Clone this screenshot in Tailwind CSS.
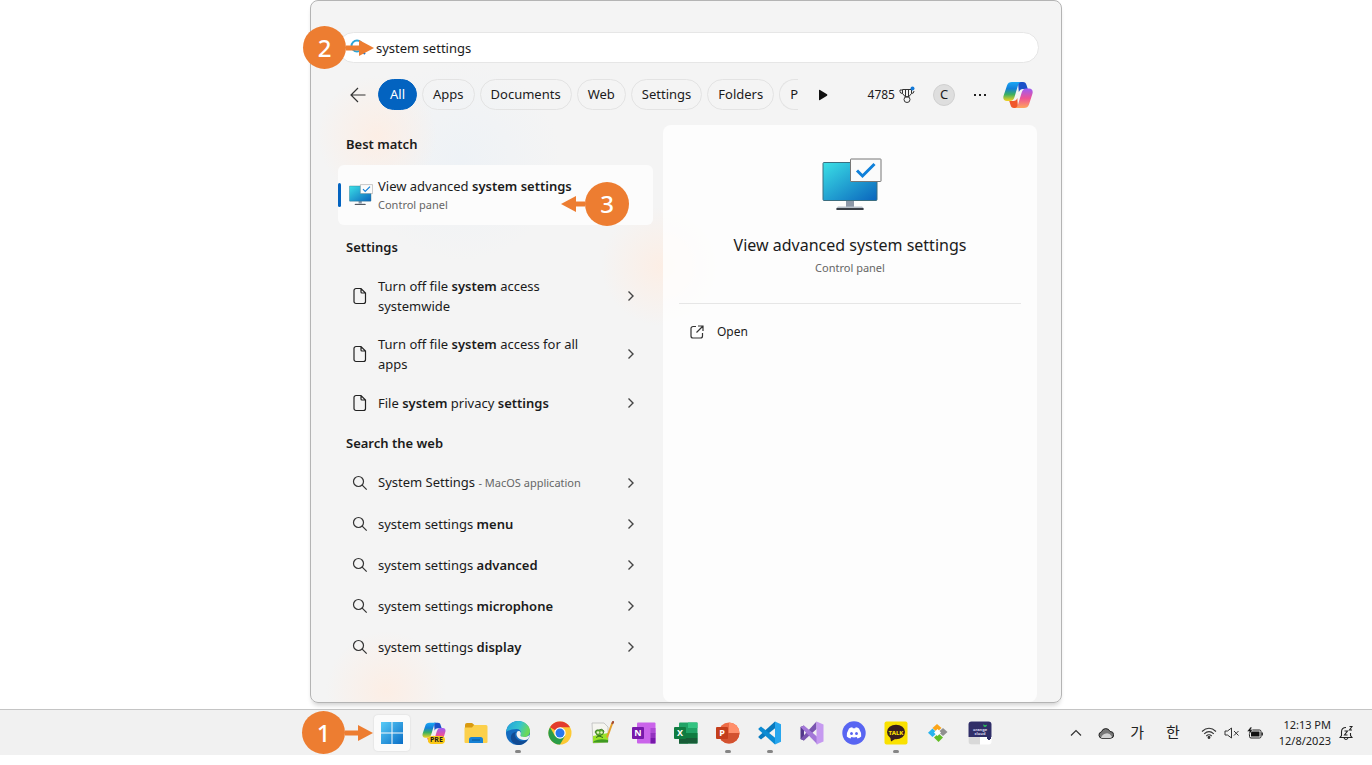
<!DOCTYPE html>
<html lang="en">
<head>
    <meta charset="UTF-8">
    <meta name="viewport" content="width=device-width, initial-scale=1.0">
    <script src="https://cdn.jsdelivr.net/npm/@tailwindcss/browser@4"></script>
    <title>Windows Search</title>
</head>
<body class="bg-white text-[#1b1b1b] font-['Noto_Sans','Noto_Sans_CJK_KR',sans-serif] text-[13px]">

    <!-- Shared icons -->
    <svg class="absolute size-0">
        <defs>
            <linearGradient id="screen" x1="0" y1="0" x2="1" y2="1">
                <stop offset="0" stop-color="#3be0e6"/><stop offset="1" stop-color="#0a64bd"/>
            </linearGradient>
            <linearGradient id="cop-left" x1="0" y1="0" x2="0" y2="1">
                <stop offset="0" stop-color="#1aa7f5"/><stop offset=".35" stop-color="#127fd8"/><stop offset=".65" stop-color="#3aaf62"/><stop offset="1" stop-color="#f5d21f"/>
            </linearGradient>
            <linearGradient id="cop-right" x1="0" y1="0" x2="0" y2="1">
                <stop offset="0" stop-color="#9b5cf6"/><stop offset=".5" stop-color="#ee5295"/><stop offset="1" stop-color="#ffa65c"/>
            </linearGradient>
        </defs>
        <symbol id="monitor" viewBox="0 0 60 54">
            <path d="M24 42h8v7h-8z" fill="#8d98a8"/>
            <path d="M16 48.500h24l1.500 1.500v2h-27v-2z" fill="#b8c0ca"/>
            <path d="M14.500 50h27v2h-27z" fill="#3a3f47"/>
            <rect x="1" y="4.500" width="54" height="38" rx="1" fill="url(#screen)" stroke="#3b6e80"/>
            <rect x="28.500" y="1" width="30.500" height="22.500" rx=".5" fill="#fbfbfb" stroke="#777"/>
            <path d="M35 12.500l5.500 5.500L52.500 6" fill="none" stroke="#0f80da" stroke-width="3"/>
        </symbol>
        <symbol id="copilot" viewBox="0 0 30 28">
            <path d="M15 1h5c2 0 3 1 3.500 3l1.300 4h-5c-2 0-3 1-4 3z" fill="#1b50c8"/>
            <path d="M15 27h-4c-2 0-3-1-3.500-3l-1.200-4h4c2 0 3.500-1 4-3z" fill="#f0582c"/>
            <path d="M9 1h9c-2 .5-2.700 2-3.200 4l-3.300 11c-.8 2.500-2 4-5 4H4c-3 0-4.200-2-3.500-5L4 4.500C4.700 2 6.500 1 9 1z" fill="url(#cop-left)"/>
            <path d="M21 27h-9c2-.5 2.700-2 3.200-4l3.300-11c.8-2.500 2-4.500 5-4.500H26c3 0 4.200 2 3.500 5L26 23.500c-.7 2.500-2.500 3.500-5 3.500z" fill="url(#cop-right)"/>
        </symbol>
        <symbol id="page" viewBox="0 0 14 18">
            <path d="M3 1.500h5l4.500 4.500v8.500a2 2 0 0 1-2 2H3a2 2 0 0 1-2-2v-11a2 2 0 0 1 2-2zM8 1.500V5a1 1 0 0 0 1 1h3.500" fill="none" stroke="#222" stroke-width="1.200"/>
        </symbol>
        <symbol id="search" viewBox="0 0 16 16">
            <circle cx="6.500" cy="6.500" r="5" fill="none" stroke="#333" stroke-width="1.200"/>
            <path d="M10.200 10.200l4.500 4.500" stroke="#333" stroke-width="1.200"/>
        </symbol>
        <symbol id="chevron" viewBox="0 0 8 12">
            <path d="M1.500 1.500L6 6l-4.500 4.500" fill="none" stroke="#444" stroke-width="1.400"/>
        </symbol>
        <symbol id="arrow" viewBox="0 0 28 16">
            <path d="M0 5.500h13V0l15 8-15 8v-5.500H0z" fill="#ed7d31"/>
        </symbol>
    </svg>

    <!-- Search window -->
    <main class="relative w-[752px] mx-auto flex flex-col border border-[#b4b4b4] rounded-lg pl-[27px] pr-6 pt-[31px] shadow-[0_4px_5px_-2px_#00000033] bg-[radial-gradient(circle_at_66px_135px,#fceee5,transparent_60px),radial-gradient(circle_at_150px_160px,#eef2f6,transparent_100px),radial-gradient(circle_at_350px_265px,#fceee5,transparent_60px),radial-gradient(circle_at_75px_690px,#fceee5,transparent_60px),linear-gradient(#f4f4f4,#f4f4f4)]">

        <div class="relative mr-[-2px]">
            <input type="text" value="system settings" aria-label="Search" class="block w-full h-[31px] rounded-full border border-[#e6e6e6] bg-white pl-[37px] outline-none">
            <svg class="absolute left-[12px] top-[7px] size-4" viewBox="0 0 16 16" fill="none" stroke-width="2">
                <circle cx="7" cy="7" r="5.500" stroke="#2aa5d8"/>
                <path d="M11 11l4 4" stroke="#1874d0"/>
            </svg>
        </div>

        <!-- Filters -->
        <div class="flex items-center h-[31px] mt-4 mb-[15px]">
            <button aria-label="Back" class="w-10 pl-3">
                <svg class="w-4 h-4" viewBox="0 0 16 16" fill="none" stroke="#333" stroke-width="1.200"><path d="M15.500 8H1M8 1L1 8l7 7"/></svg>
            </button>
            <div class="flex gap-[5px] w-[420px] overflow-hidden whitespace-nowrap">
                <button class="h-[31px] px-[11px] rounded-full bg-[#0363c0] border border-[#0363c0] text-white">All</button>
                <button class="h-[31px] px-[10px] rounded-full border border-[#e3e3e3]">Apps</button>
                <button class="h-[31px] px-[10px] rounded-full border border-[#e3e3e3]">Documents</button>
                <button class="h-[31px] px-[10px] rounded-full border border-[#e3e3e3]">Web</button>
                <button class="h-[31px] px-[10px] rounded-full border border-[#e3e3e3]">Settings</button>
                <button class="h-[31px] px-[10px] rounded-full border border-[#e3e3e3]">Folders</button>
                <button class="h-[31px] pl-[10px] flex-1 rounded-l-full border border-r-0 border-[#e3e3e3] text-left">P</button>
            </div>
            <button aria-label="More filters" class="ml-5">
                <svg class="w-[10px] h-3" viewBox="0 0 10 12"><path d="M1 1.500Q1 .3 2 1l7 4.200q.8.800 0 1.600L2 11q-1 .7-1-.5z" fill="#111"/></svg>
            </button>
            <div class="flex items-center ml-auto">
                <span class="text-[12px]">4785</span>
                <svg class="w-4 h-[18px] ml-1" viewBox="0 0 16 18" fill="none" stroke="#333">
                    <path d="M3.500 3.500h9v4L9.500 11h-3l-3-3.500zM6.500 3.500V11M9.500 3.500V11M3.500 4H1v1.500q0 2 2.500 2M12.500 7.500q2.500 0 2.500-2.500"/>
                    <circle cx="8" cy="13.500" r="3"/>
                    <circle cx="13.500" cy="2.500" r="2" fill="#1379d8" stroke="none"/>
                </svg>
                <button class="ml-[18px] size-[22px] rounded-full border border-[#d0d0d0] bg-[#dedede] leading-none">C</button>
                <button aria-label="Options" class="ml-[19px] flex gap-[3px]">
                    <i class="size-[2px] bg-[#222]"></i><i class="size-[2px] bg-[#222]"></i><i class="size-[2px] bg-[#222]"></i>
                </button>
                <button aria-label="Copilot" class="ml-[17px] mr-1"><svg class="w-[30px] h-7"><use href="#copilot"/></svg></button>
            </div>
        </div>

        <div class="flex gap-[10px]">
            <!-- Results -->
            <div class="flex-1 pb-[35px] leading-5">
                <h2 class="h-10 flex items-center pl-2 pb-[2px] font-semibold">Best match</h2>
                <button class="relative w-full h-[60px] flex items-center rounded-md bg-[#fcfcfc] pl-[11px] text-left">
                    <span class="absolute left-0 h-6 w-[3px] rounded-full bg-[#0363c0]"></span>
                    <svg class="w-6 h-[22px]"><use href="#monitor"/></svg>
                    <span class="ml-[5px]">
                        <span class="block leading-5">View advanced <b class="font-semibold">system settings</b></span>
                        <span class="block text-[11px] leading-[18px] text-[#666]">Control panel</span>
                    </span>
                </button>

                <h2 class="h-[42px] flex items-center pl-2 pt-[2px] font-semibold">Settings</h2>
                <button class="w-full h-[58px] flex items-center pl-[15px] pr-[18px] text-left">
                    <svg class="w-[14px] h-[18px] shrink-0"><use href="#page"/></svg>
                    <span class="ml-[11px] w-[210px]">Turn off file <b class="font-semibold">system</b> access systemwide</span>
                    <svg class="w-2 h-3 ml-auto"><use href="#chevron"/></svg>
                </button>
                <button class="w-full h-[58px] flex items-center pl-[15px] pr-[18px] text-left">
                    <svg class="w-[14px] h-[18px] shrink-0"><use href="#page"/></svg>
                    <span class="ml-[11px] w-[210px]">Turn off file <b class="font-semibold">system</b> access for all apps</span>
                    <svg class="w-2 h-3 ml-auto"><use href="#chevron"/></svg>
                </button>
                <button class="w-full h-10 flex items-center pl-[15px] pr-[18px] text-left">
                    <svg class="w-[14px] h-[18px] shrink-0"><use href="#page"/></svg>
                    <span class="ml-[11px]">File <b class="font-semibold">system</b> privacy <b class="font-semibold">settings</b></span>
                    <svg class="w-2 h-3 ml-auto"><use href="#chevron"/></svg>
                </button>

                <h2 class="h-[39px] flex items-center pl-2 font-semibold">Search the web</h2>
                <button class="w-full h-[41px] flex items-center pl-[14px] pr-[18px] text-left">
                    <svg class="size-4"><use href="#search"/></svg>
                    <span class="ml-[10px]">System Settings <span class="text-[11px] text-[#666]">- MacOS application</span></span>
                    <svg class="w-2 h-3 ml-auto"><use href="#chevron"/></svg>
                </button>
                <button class="w-full h-[41px] flex items-center pl-[14px] pr-[18px] text-left">
                    <svg class="size-4"><use href="#search"/></svg>
                    <span class="ml-[10px]">system settings <b class="font-semibold">menu</b></span>
                    <svg class="w-2 h-3 ml-auto"><use href="#chevron"/></svg>
                </button>
                <button class="w-full h-[41px] flex items-center pl-[14px] pr-[18px] text-left">
                    <svg class="size-4"><use href="#search"/></svg>
                    <span class="ml-[10px]">system settings <b class="font-semibold">advanced</b></span>
                    <svg class="w-2 h-3 ml-auto"><use href="#chevron"/></svg>
                </button>
                <button class="w-full h-[41px] flex items-center pl-[14px] pr-[18px] text-left">
                    <svg class="size-4"><use href="#search"/></svg>
                    <span class="ml-[10px]">system settings <b class="font-semibold">microphone</b></span>
                    <svg class="w-2 h-3 ml-auto"><use href="#chevron"/></svg>
                </button>
                <button class="w-full h-[41px] flex items-center pl-[14px] pr-[18px] text-left">
                    <svg class="size-4"><use href="#search"/></svg>
                    <span class="ml-[10px]">system settings <b class="font-semibold">display</b></span>
                    <svg class="w-2 h-3 ml-auto"><use href="#chevron"/></svg>
                </button>
            </div>

            <!-- Preview -->
            <section class="w-[374px] rounded-lg bg-white/80 px-4 pt-[33px]">
                <div class="flex flex-col items-center pb-[26px] border-b border-[#e6e6e6]">
                    <svg class="w-[60px] h-[54px] ml-1"><use href="#monitor"/></svg>
                    <h1 class="mt-[21px] text-[16px] leading-6">View advanced system settings</h1>
                    <p class="mt-[2px] text-[11px] leading-[18px] text-[#666]">Control panel</p>
                </div>
                <button class="flex items-center mt-[18px] pl-[11px] text-[12px] leading-5">
                    <svg class="size-[14px] mr-[13px]" viewBox="0 0 14 14" fill="none" stroke="#333" stroke-width="1.200"><path d="M6 1.500H3a2 2 0 0 0-2 2V11a2 2 0 0 0 2 2h7.500a2 2 0 0 0 2-2V8M8 1h5v5M13 1L6.500 7.500"/></svg>
                    Open
                </button>
            </section>
        </div>

        <!-- Step 2 -->
        <div class="absolute left-[-8px] top-[25px] flex items-center">
            <span class="size-[43px] rounded-full bg-[#ed7d31] text-white text-2xl font-medium flex items-center justify-center">2</span>
            <svg class="w-7 h-4"><use href="#arrow"/></svg>
        </div>
        <!-- Step 3 -->
        <div class="absolute left-[250px] top-[181px] flex items-center">
            <svg class="w-6 h-4" viewBox="0 0 24 16"><path d="M24 5.500h-9V0L0 8l15 8v-5.500h9z" fill="#ed7d31"/></svg>
            <span class="size-[44px] rounded-full bg-[#ed7d31] text-white text-2xl font-medium flex items-center justify-center">3</span>
        </div>
    </main>

    <!-- Taskbar -->
    <footer class="mt-[6px] h-[46px] grid grid-cols-[1fr_auto_1fr] items-center border-t border-[#c4c4c4] bg-[#f1f1f1]">
        <nav class="relative col-start-2 flex items-center">
            <!-- Step 1 -->
            <div class="absolute right-full mr-[-2px] flex items-center">
                <span class="size-[43px] rounded-full bg-[#ed7d31] text-white text-2xl font-medium flex items-center justify-center">1</span>
                <svg class="w-7 h-4"><use href="#arrow"/></svg>
            </div>
            <button aria-label="Start" class="w-[42px] h-11 flex items-center justify-center">
                <span class="size-9 rounded bg-[#fbfbfb] shadow-[0_0_2px_#00000022] flex items-center justify-center">
                    <svg class="size-6" viewBox="0 0 24 24">
                        <linearGradient id="win" gradientUnits="userSpaceOnUse" x1="0" y1="0" x2="24" y2="24"><stop offset="0" stop-color="#5cd0f9"/><stop offset="1" stop-color="#0669c4"/></linearGradient>
                        <path d="M1 1h10.500v10.500H1zM12.500 1H23v10.500H12.500zM1 12.500h10.500V23H1zM12.500 12.500H23V23H12.500z" fill="url(#win)"/>
                    </svg>
                </span>
            </button>
            <button aria-label="Copilot preview" class="relative w-[42px] h-11 flex items-center justify-center">
                <svg class="w-6 h-[22px]"><use href="#copilot"/></svg>
                <span class="absolute left-[15px] top-[25px] px-[2px] rounded-sm bg-[#fbc916] text-[7px] leading-[8px] font-bold">PRE</span>
            </button>
            <button aria-label="File Explorer" class="w-[42px] h-11 flex items-center justify-center">
                <svg class="size-6" viewBox="0 0 24 24"><path d="M1 4q0-2 2-2h5l3 2.500v4H1z" fill="#d99a10"/><path d="M10 4h12q1.500 0 1.500 1.500V21q0 1-1 1H1.500q-1 0-1-1V6.500H8z" fill="#fcd04b"/><path d="M5 22v-3.500q0-2.500 2.500-2.500h9q2.500 0 2.500 2.500V22z" fill="#1681d5"/><path d="M8 19h8" stroke="#0b5794"/></svg>
            </button>
            <button aria-label="Edge" class="relative w-[42px] h-11 flex items-center justify-center">
                <svg class="size-6" viewBox="0 0 24 24">
                    <linearGradient id="edge" x1="0" y1="0" x2="1" y2=".3"><stop offset="0" stop-color="#219fdc"/><stop offset=".6" stop-color="#36c4cf"/><stop offset="1" stop-color="#6bd85a"/></linearGradient>
                    <circle cx="12" cy="12" r="12" fill="#146bc0"/>
                    <path d="M0 11C1 4.500 5.500 0 12 0c7 0 12 5 12 10 0 4-3 6-6 6-2.500 0-4-1-3.500-2 1.500-2.500 0-6-4-6C5.500 8 1 10 0 11z" fill="url(#edge)"/>
                    <path d="M9 12c-1 5 4 9 9 8l4-2c-2 4-6 6-10 6-5-1-8-5-7-9 .5-2.500 3-4 5.500-4z" fill="#114b93"/>
                    <path d="M11 11c-2 4 2 8 7 8 2 0 3.500-.5 4.500-1.500L24 13.500c-2 2-4 2.500-6 2.500-2.500 0-4-1-3.500-2 .5-1 .5-2.500-.5-3.500-1-.8-2.500-.5-3 .5z" fill="#f1f1f1"/>
                </svg>
                <i class="absolute bottom-[2px] h-[3px] w-[6px] rounded-full bg-[#858585]"></i>
            </button>
            <button aria-label="Chrome" class="w-[42px] h-11 flex items-center justify-center">
                <svg class="size-6" viewBox="0 0 24 24"><circle cx="12" cy="12" r="11.500" fill="#fcc934"/><path d="M12 12L2 6.200A11.500 11.500 0 0 1 22 6.200H12z" fill="#e33b2e"/><path d="M2 6.200A11.500 11.500 0 0 0 12 23.500l5-8.600L7 14.900z" fill="#2a9d48"/><circle cx="12" cy="12" r="5.700" fill="#fff"/><circle cx="12" cy="12" r="4.500" fill="#2878ee"/></svg>
            </button>
            <button aria-label="Notepad++" class="w-[42px] h-11 flex items-center justify-center">
                <svg class="size-6" viewBox="0 0 24 24"><path d="M2 2h12l4 4v15L3 22z" fill="#f5f5f0" stroke="#bbb" stroke-width=".8"/><path d="M3 15l15-3v9L3 22z" fill="#9be32a"/><path d="M4 20q6-3 14-1v2.500H3z" fill="#3f9a22"/><path d="M5 11q1-3 4-2 3-2 5 1l-1 3q-3 3-6 1z" fill="#63b233" stroke="#2d6a1c" stroke-width=".8"/><circle cx="8" cy="11.500" r="1.200" fill="#e7f6c5"/><circle cx="11.500" cy="11.500" r="1.200" fill="#e7f6c5"/><path d="M6 16.500l3-1.500 4 1.500" fill="none" stroke="#2d6a1c"/><path d="M22.500 1.500L17 16.500" stroke="#e3a02d" stroke-width="2"/><path d="M23.400 0l-1.200 3" stroke="#a44c35" stroke-width="2"/></svg>
            </button>
            <button aria-label="OneNote" class="w-[42px] h-11 flex items-center justify-center">
                <svg class="size-6" viewBox="0 0 24 24"><rect x="5" y="1.500" width="18.500" height="21" rx="1" fill="#ca64ea"/><path d="M18.500 7h5v5.500h-5z" fill="#ae4bd5"/><path d="M18.500 12h5v5h-5z" fill="#9332bf"/><path d="M18.500 17h5v5.500h-5z" fill="#7719aa"/><rect x="0" y="6" width="12" height="12" rx="1" fill="#7719aa"/><text x="6" y="15.200" text-anchor="middle" font-size="9" font-weight="700" fill="#fff">N</text></svg>
            </button>
            <button aria-label="Excel" class="w-[42px] h-11 flex items-center justify-center">
                <svg class="size-6" viewBox="0 0 24 24"><rect x="5" y="1.500" width="18.500" height="21" rx="1" fill="#21a366"/><path d="M14 1.500h9.500v5.500H14z" fill="#33c481"/><path d="M5 12h9v10.500H5zM14 12h9.500v5H14z" fill="#107c41"/><path d="M5 17h18.500v5.500H5z" fill="#185c37"/><rect x="0" y="6" width="12" height="12" rx="1" fill="#107c41"/><text x="6" y="15.200" text-anchor="middle" font-size="9" font-weight="700" fill="#fff">X</text></svg>
            </button>
            <button aria-label="PowerPoint" class="relative w-[42px] h-11 flex items-center justify-center">
                <svg class="size-6" viewBox="0 0 24 24"><circle cx="13" cy="12" r="10.500" fill="#ed6c47"/><path d="M13 1.500A10.500 10.500 0 0 1 23.500 12H13z" fill="#ff8f6b"/><path d="M2.500 12h21a10.500 10.500 0 0 1-21 0z" fill="#d35230"/><rect x="0" y="6" width="12" height="12" rx="1" fill="#c43e1c"/><text x="6" y="15.200" text-anchor="middle" font-size="9" font-weight="700" fill="#fff">P</text></svg>
                <i class="absolute bottom-[2px] h-[3px] w-[6px] rounded-full bg-[#858585]"></i>
            </button>
            <button aria-label="Visual Studio Code" class="relative w-[42px] h-11 flex items-center justify-center">
                <svg class="size-6" viewBox="0 0 24 24"><path d="M17 .5l1 6L3 18.500 .5 16.500v-1z" fill="#0879be"/><path d="M.5 8.500v-1L3 5.500l15 12-1 6z" fill="#0b8bd3"/><path d="M17 .5l6 2.800v17.400l-6 2.800z" fill="#27a6ee"/></svg>
                <i class="absolute bottom-[2px] h-[3px] w-[6px] rounded-full bg-[#858585]"></i>
            </button>
            <button aria-label="Visual Studio" class="w-[42px] h-11 flex items-center justify-center">
                <svg class="size-6" viewBox="0 0 24 24"><path d="M.5 6L4 4.500V19.500L.5 18z" fill="#52378a"/><path d="M4 19.500L.5 18 16.500.5V8z" fill="#7a55b0"/><path d="M.5 6L4 4.500 17.500 16v7.500z" fill="#a377d8"/><path d="M16.500.5l7 3v17l-7 3z" fill="#c69af0"/></svg>
            </button>
            <button aria-label="Discord" class="w-[42px] h-11 flex items-center justify-center">
                <svg class="size-6" viewBox="0 0 24 24"><circle cx="12" cy="12" r="11.700" fill="#5865f2"/><path d="M7 7.500q2-1.200 3.300-1.200l.5 1h2.400l.5-1q1.300 0 3.300 1.200 2.500 4 2.200 8-1.500 1.500-3.700 2l-.8-1.400q-2.700.6-5.400 0l-.8 1.400q-2.200-.5-3.700-2-.3-4 2.200-8z" fill="#fff"/><ellipse cx="9.500" cy="12.500" rx="1.400" ry="1.600" fill="#5865f2"/><ellipse cx="14.500" cy="12.500" rx="1.400" ry="1.600" fill="#5865f2"/></svg>
            </button>
            <button aria-label="KakaoTalk" class="relative w-[42px] h-11 flex items-center justify-center">
                <svg class="size-6" viewBox="0 0 24 24"><rect x=".5" y=".5" width="23" height="23" rx="2" fill="#fae100"/><ellipse cx="12" cy="11" rx="9" ry="7.300" fill="#371d1e"/><path d="M6 15l1 5.500 5-3z" fill="#371d1e"/><text x="12" y="13.500" text-anchor="middle" font-size="6" font-weight="800" fill="#fae100">TALK</text></svg>
                <i class="absolute bottom-[2px] h-[3px] w-[6px] rounded-full bg-[#858585]"></i>
            </button>
            <button aria-label="Source tool" class="w-[42px] h-11 flex items-center justify-center">
                <svg class="size-6" viewBox="0 0 24 24"><path d="M11 3l4.500 4-4.500 4-4.500-4z" fill="#fba51a"/><path d="M6.500 7.500L11 11.700 6.500 16 2 11.700z" fill="#29b4ed"/><path d="M17 7l4.500 4-4.500 4-4.500-4z" fill="#909090"/><path d="M12.500 12.500l4.500 4-4.500 4.500L8 16.500z" fill="#62bd25"/><path d="M11.500 8l3.500 3.500-3.500 3.500L8 11.500z" fill="#fff"/></svg>
            </button>
            <button aria-label="Cloud app" class="w-[42px] h-11 flex items-center justify-center">
                <svg class="size-6" viewBox="0 0 24 24"><rect x=".5" y=".5" width="23" height="23" rx="3" fill="#fff"/><path d="M.5 16H12v7.500H3.500q-3 0-3-3z" fill="#d9d9d9"/><path d="M3.500.5h17q3 0 3 3V16H.5V3.500q0-3 3-3z" fill="#302e68"/><path d="M19 16h4v2h-1v1h-2v-1h-1z" fill="#302e68"/><path d="M15 3.500q1.500 0 2 1 .8-1 2-.5-.5 2-2 2-1.500 0-2-2.500z" fill="#2bc55a"/><text x="12" y="10" text-anchor="middle" font-size="4" font-weight="700" fill="#d8d8ee">orange</text><text x="12" y="14" text-anchor="middle" font-size="4" font-weight="700" fill="#d8d8ee">cloud</text></svg>
            </button>
        </nav>

        <!-- System tray -->
        <div class="flex items-center justify-end pr-[19px] text-[#222]">
            <button aria-label="Hidden icons" class="mr-4"><svg class="w-3 h-3" viewBox="0 0 12 12" fill="none" stroke="#333" stroke-width="1.200"><path d="M1 8.500l5-5 5 5"/></svg></button>
            <svg class="w-4 h-3 mr-4" viewBox="0 0 16 12"><path d="M4 11.300a3.300 3.300 0 0 1-.5-6.500A4.500 4.500 0 0 1 12 4.500a3.400 3.400 0 0 1 .5 6.800z" fill="#777" stroke="#222"/><path d="M3 11q1-4 5-4.500 3-1 6 3-.5 1.500-2 1.500z" fill="#d2d2d2"/></svg>
            <button class="mr-[22px] text-[15px]">가</button>
            <button class="mr-[21px] text-[15px]">한</button>
            <svg class="w-4 h-3 mr-[7px]" viewBox="0 0 16 12" fill="none" stroke="#333" stroke-width="1.100"><path d="M1 4.500q7-6.500 14 0M3.200 6.800q4.800-4.500 9.600 0M5.300 9q2.700-2.500 5.400 0"/><circle cx="8" cy="10.500" r=".9" fill="#333"/></svg>
            <svg class="w-4 h-3 mr-[7px]" viewBox="0 0 16 12" fill="none" stroke="#333"><path d="M1 4h2.500L7.500 1v10l-4-3H1zM10 4l4.500 4.500M14.500 4L10 8.500"/></svg>
            <svg class="w-4 h-3 mr-4" viewBox="0 0 16 12"><rect x="2.500" y="3" width="11.500" height="8" rx="1.500" fill="#f1f1f1" stroke="#222"/><rect x="4" y="4.500" width="8.500" height="5" fill="#111"/><path d="M15.200 5.500v3" stroke="#111" stroke-width="1.300"/><path d="M3.500 0L0 4.500h2.500L1.500 8 6 3H3.800L5 0z" fill="#111" stroke="#f1f1f1" stroke-width=".5"/></svg>
            <button class="text-right text-[11px] leading-4">12:13 PM<br>12/8/2023</button>
            <button aria-label="Notifications" class="ml-2"><svg class="w-[14px] h-4" viewBox="0 0 14 16" fill="none" stroke="#222" stroke-width="1.100"><path d="M7 2.500Q2.500 2.500 2.500 7v3.500L1 12.500h12L11.500 10.500V8M5 13q2 3 4 0M5.500 6h3l-3 4h3M10.500 1.500h2.500l-2.500 3.500h2.500"/></svg></button>
        </div>
    </footer>

</body>
</html>
